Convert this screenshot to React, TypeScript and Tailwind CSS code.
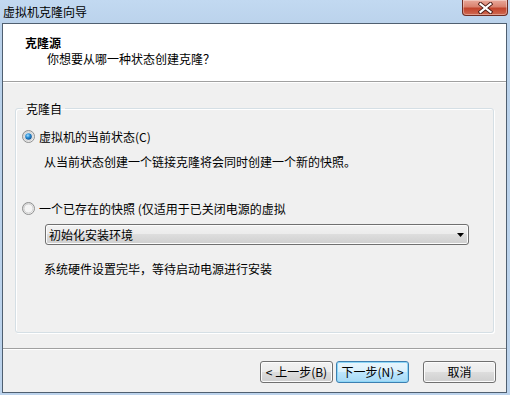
import React from "react";

function Radio({ checked }: { checked: boolean }) {
  return (
    <svg width="13" height="13" viewBox="0 0 13 13" className="shrink-0">
      <defs>
        <linearGradient id={checked ? "rg1" : "rg0"} x1="0" y1="0" x2="1" y2="1">
          <stop offset="0" stopColor="#d0d0d0" />
          <stop offset="1" stopColor="#ffffff" />
        </linearGradient>
        <radialGradient id="dot" cx="0.4" cy="0.35" r="0.7">
          <stop offset="0" stopColor="#a8e0ff" />
          <stop offset="0.45" stopColor="#2b8fd6" />
          <stop offset="1" stopColor="#0b4a8a" />
        </radialGradient>
      </defs>
      <circle cx="6.5" cy="6.5" r="6" fill={`url(#${checked ? "rg1" : "rg0"})`} stroke="#8e8f8f" strokeWidth="1" />
      <circle cx="6.5" cy="6.5" r="4.5" fill="#f4f4f4" stroke="#d0d0d0" strokeWidth="1" />
      {checked && <circle cx="6.5" cy="6.5" r="3.3" fill="url(#dot)" />}
    </svg>
  );
}

function Btn({ children, primary }: { children: React.ReactNode; primary?: boolean }) {
  return (
    <div
      className={
        "w-[73px] h-[22px] rounded-[3px] border flex items-center justify-center text-[12px] leading-none text-black " +
        (primary
          ? "border-[#3c7fb1] bg-[linear-gradient(#eaf6fd_0%,#d9f0fc_50%,#bee6fd_50%,#a7d9f5_100%)] shadow-[inset_0_0_0_1px_#8ed7f7]"
          : "border-[#707070] bg-[linear-gradient(#f2f2f2_0%,#ebebeb_50%,#dddddd_50%,#cfcfcf_100%)] shadow-[inset_0_0_0_1px_#fcfcfc]")
      }
    >
      {children}
    </div>
  );
}

export default function App() {
  return (
    <div className="w-[510px] h-[395px] flex flex-col bg-[linear-gradient(#c2d9f1,#b9d1ea_30px,#bcd3ec)] font-['Noto_Sans_CJK_SC','Noto_Sans',sans-serif] text-[12px] text-black overflow-hidden">
      {/* Title bar */}
      <div className="h-[23px] flex items-start shrink-0">
        <div className="pl-[3px] pt-[4px] leading-[15px] text-[12px] text-black">虚拟机克隆向导</div>
        <div className="ml-auto mr-[2px] w-[46px] h-[16px] rounded-b-[4px] border border-t-0 border-[#6d2d24] bg-[linear-gradient(#e9a99b_0%,#d9826f_45%,#c2442c_55%,#d06a52_100%)] shadow-[inset_0_0_0_1px_rgba(255,255,255,0.35)] flex items-center justify-center">
          <svg width="15" height="12" viewBox="0 0 15 12">
            <path d="M2.5 2 L12.5 10 M12.5 2 L2.5 10" stroke="#4a1a14" strokeWidth="4" strokeLinecap="square" />
            <path d="M2.5 2 L12.5 10 M12.5 2 L2.5 10" stroke="#ffffff" strokeWidth="2.2" strokeLinecap="square" />
          </svg>
        </div>
      </div>

      {/* Client */}
      <div className="flex-1 ml-[2px] mr-[3px] mb-[2px] border border-[#4f5f70] bg-[#f0f0f0] flex flex-col">
        {/* Header */}
        <div className="h-[58px] bg-white border-b border-[#a0a0a0] shrink-0 pl-[22px] pt-[11px]">
          <div className="font-bold leading-[15px]">克隆源</div>
          <div className="pl-[22px] leading-[15px] mt-[1px]">你想要从哪一种状态创建克隆？</div>
        </div>
        <div className="h-px bg-white shrink-0" />

        {/* Body */}
        <div className="flex-1 flex flex-col">
          <fieldset className="mx-[12px] mt-[18px] h-[232px] border border-[#d5dfe5] rounded-[3px] shadow-[inset_1px_1px_0_#fff,1px_1px_0_#fff] px-[6px]">
            <legend className="ml-[1px] px-[3px] leading-[15px]">克隆自</legend>
            <div className="flex items-center gap-[4px] mt-[13px] h-[15px]">
              <Radio checked />
              <span className="leading-[15px]">虚拟机的当前状态(C)</span>
            </div>
            <div className="pl-[22px] mt-[10px] leading-[15px]">从当前状态创建一个链接克隆将会同时创建一个新的快照。</div>
            <div className="flex items-center gap-[4px] mt-[32px] h-[15px]">
              <Radio checked={false} />
              <span className="leading-[15px]">一个已存在的快照 (仅适用于已关闭电源的虚拟</span>
            </div>
            <div className="ml-[23px] mr-[18px] mt-[8px] h-[21px] rounded-[3px] border border-[#707070] bg-[linear-gradient(#f2f2f2_0%,#ebebeb_50%,#dddddd_50%,#cfcfcf_100%)] shadow-[inset_0_0_0_1px_#fcfcfc] flex items-center pl-[3px] pr-[3px]">
              <span className="leading-[15px]">初始化安装环境</span>
              <svg className="ml-auto mr-[1px]" width="7" height="4" viewBox="0 0 7 4">
                <path d="M0 0 H7 L3.5 4 Z" fill="#000" />
              </svg>
            </div>
            <div className="pl-[22px] mt-[16px] leading-[15px]">系统硬件设置完毕，等待启动电源进行安装</div>
          </fieldset>

          <div className="mt-auto h-px bg-[#a0a0a0]" />
          <div className="h-px bg-white" />
          <div className="h-[42px] flex items-center justify-end pr-[10px] pt-[1px]">
            <Btn>&lt; 上一步(B)</Btn>
            <div className="w-[3px]" />
            <Btn primary>下一步(N) &gt;</Btn>
            <div className="w-[14px]" />
            <Btn>取消</Btn>
          </div>
        </div>
      </div>
    </div>
  );
}
